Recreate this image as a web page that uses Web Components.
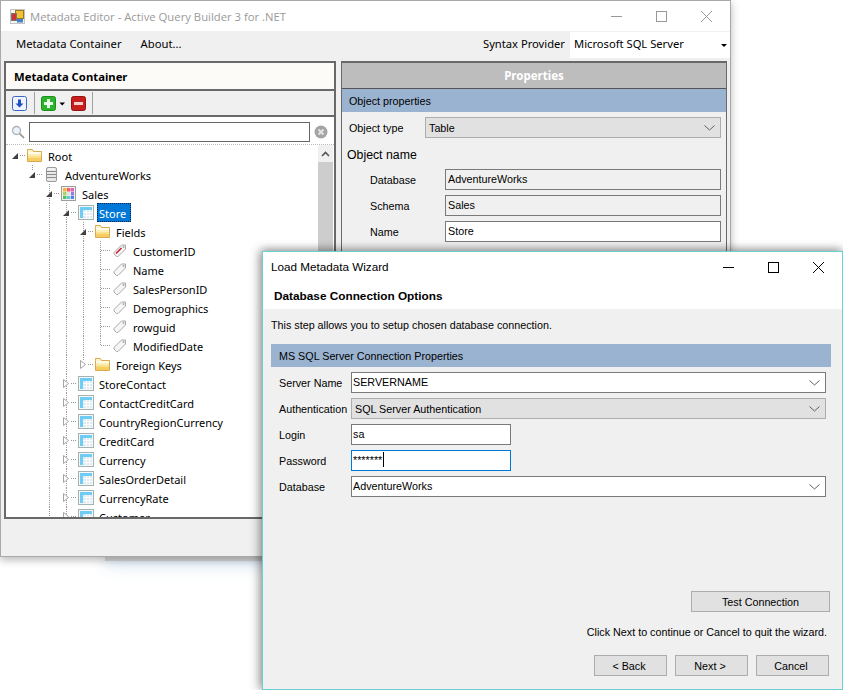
<!DOCTYPE html>
<html lang="en"><head><meta charset="utf-8"><title>Metadata Editor</title>
<style>
html,body{margin:0;padding:0;height:100%;background:#fff;overflow:hidden}
body{position:relative;width:843px;height:690px;font-family:"Liberation Sans",Arial,sans-serif;font-size:10.75px;color:#000}
</style></head><body>

<template id="t-behind"><style>
:host{display:block;position:absolute;left:105px;top:300px;width:300px;height:261px;background:#d6d6d6;box-shadow:0 5px 14px rgba(130,175,215,.3)}
</style></template>

<template id="t-main"><style>
:host{display:flex;flex-direction:column;position:absolute;left:0;top:0;width:729px;height:555px;background:#f0f0f0;border:1px solid #a9a9a9;box-shadow:0 3px 8px rgba(0,0,0,.28)}
.title{height:30px;background:#fff;display:flex;align-items:center;padding-left:9px;gap:5px;font:11.3px "Open Sans",sans-serif;color:#9a9a9a;flex:none}
.title span{flex:1}
.menu{height:27px;display:flex;align-items:center;flex:none;padding-left:15px;font:11.25px "Noto Sans",sans-serif}
.menu .m{margin-right:19px;margin-top:-2px}
.menu .sp{margin-left:auto;margin-right:5px;font-size:11.2px;margin-top:-2px}
.sel{width:160px;height:26px;background:#fff;display:flex;align-items:center;padding:0 0 2px 4px;box-sizing:border-box;margin-right:0;position:relative;font-size:11.2px}
.sel i{position:absolute;right:3px;top:12px;width:0;height:0;border:3px solid transparent;border-top:3px solid #000;border-bottom:0}
.body{flex:1;display:flex;gap:5px;padding:3px 3px 0 3px;min-height:0}
</style>
<div class="title"><svg width="15" height="15" viewBox="0 0 15 15"><rect x=".5" y=".5" width="14" height="14" fill="#f4f4f4" stroke="#c4c4c4"/><rect x="5.5" y="1.5" width="8" height="8" fill="#f2c230" stroke="#9a7a20"/><rect x="1.5" y="4.5" width="5" height="7" fill="#c33" stroke="#777"/><rect x="7" y="10" width="6" height="3.5" fill="#4a7ed0"/></svg><span>Metadata Editor - Active Query Builder 3 for .NET</span><win-controls dim style="margin-right:2px"></win-controls></div>
<div class="menu"><div class="m">Metadata Container</div><div class="m">About...</div><div class="sp">Syntax Provider</div><div class="sel">Microsoft SQL Server<i></i></div></div>
<div class="body"><slot></slot></div>
</template>

<template id="t-ctrl"><style>
:host{display:flex;width:135px;height:30px;flex:none}
div{width:45px;height:100%;display:flex;align-items:center;justify-content:center}
svg{stroke:#000;fill:none;stroke-width:1}
:host([dim]) svg{stroke:#999}
</style>
<div><svg width="12" height="12"><path d="M1 6.5H12"/></svg></div>
<div><svg width="12" height="12"><rect x="1.5" y="1.5" width="10" height="10"/></svg></div>
<div><svg width="12" height="12"><path d="M1 1L12 12M12 1L1 12"/></svg></div>
</template>

<template id="t-left"><style>
:host{display:flex;flex-direction:column;width:332px;height:458px;box-sizing:border-box;border:2px solid #696969;background:#fff;flex:none}
.hd{height:26px;background:#fdfbf8;display:flex;align-items:center;padding-left:8px;font:bold 11.3px "Noto Sans",sans-serif;border-bottom:2px solid #696969;flex:none;color:#000}
.tb{height:24px;background:#f0f0f0;display:flex;align-items:center;border-bottom:2px solid #696969;flex:none;padding-left:6px;box-sizing:content-box}
.sep{width:1px;height:22px;background:#a0a0a0;margin:0 6px}
.search{height:28px;display:flex;align-items:center;flex:none;border-bottom:1px dotted #bbb;box-sizing:border-box;background:#fff;padding:2px 0 0 5px}
.inp{width:281px;height:20px;box-sizing:border-box;border:1px solid #666;margin:0 4px 0 4px;background:#fff}
.main{flex:1;display:flex;min-height:0;position:relative;overflow:hidden}
.tree{flex:1;padding-top:1px;overflow:hidden}
.sb{width:15px;background:#cdcdcd;margin-right:1px;flex:none}
.sb div{height:17px;background:#f0f0f0;display:flex;align-items:center;justify-content:center}
</style>
<div class="hd">Metadata Container</div>
<div class="tb">
<svg width="15" height="15" viewBox="0 0 15 15"><rect x=".5" y=".5" width="14" height="14" rx="2" fill="#eef3fd" stroke="#3b66c9"/><path d="M7.5 11.5L3.5 7.5H6V3.5H9V7.5H11.5Z" fill="#2050c0"/></svg>
<div class="sep" style="margin-left:7px"></div>
<svg width="15" height="15" viewBox="0 0 15 15"><rect x=".5" y=".5" width="14" height="14" rx="2" fill="#2cb52c" stroke="#1a8f1a"/><path d="M6 3H9V6H12V9H9V12H6V9H3V6H6Z" fill="#eaffea"/></svg>
<svg width="9" height="15" viewBox="0 0 9 15" style="margin-left:2px"><path d="M1.5 6.5H7L4.2 9.5Z" fill="#000"/></svg>
<svg width="15" height="15" viewBox="0 0 15 15" style="margin-left:4px"><rect x=".5" y=".5" width="14" height="14" rx="2" fill="#c81e1e" stroke="#941414"/><rect x="3" y="6" width="9" height="3" fill="#f6d0d0"/></svg>
<div class="sep" style="margin-left:6px"></div>
</div>
<div class="search">
<svg width="14" height="14" viewBox="0 0 14 14"><circle cx="5.5" cy="5.5" r="4" fill="#eef3f8" stroke="#a9b4bf" stroke-width="1.3"/><path d="M8.5 8.5L13 13" stroke="#9a8f80" stroke-width="1.7"/></svg>
<div class="inp"></div>
<svg width="14" height="14" viewBox="0 0 14 14"><circle cx="7" cy="7" r="6.5" fill="#a4a4a4"/><path d="M4.5 4.5L9.5 9.5M9.5 4.5L4.5 9.5" stroke="#e4e4e4" stroke-width="1.8"/></svg>
</div>
<div class="main"><div class="tree"><slot></slot></div>
<div class="sb"><div><svg width="9" height="6" viewBox="0 0 9 6"><path d="M1 5L4.5 1.5L8 5" fill="none" stroke="#555" stroke-width="1.6"/></svg></div></div></div>
</template>

<template id="t-row"><style>
:host{display:flex;height:19px;align-items:center;font:11px "Noto Sans",sans-serif;color:#000;white-space:nowrap}
#g{display:contents}
svg{flex:none;display:block}
.l{padding:0 4px 0 1px;height:19px;line-height:19px;box-sizing:border-box;border:1px solid transparent}
:host([sel]) .l{background:#0078d7;color:#fff;border:1px dotted #00224d}
</style><span id="g"></span><span class="l"><slot></slot></span></template>

<template id="t-right"><style>
:host{display:flex;flex-direction:column;flex:1;box-sizing:border-box;border:1px solid #696969;border-top:2px solid #696969;height:493px}
.hd{height:25px;background:#bdbdbd;color:#fff;font:bold 11.5px "Noto Sans",sans-serif;display:flex;align-items:center;justify-content:center;border-bottom:1px solid #555;flex:none;text-align:center}
.sec{height:23px;background:#9ab3d0;display:flex;align-items:center;padding-left:7px;flex:none}
.t{margin:5px 5px 0 7px;display:flex;align-items:center;height:21px}
.t span{width:76px;flex:none}
.on{padding-left:5px;margin-top:10px;height:14px;line-height:14px;font-size:12.3px}
.g{display:grid;grid-template-columns:75px 1fr;row-gap:5px;margin:7px 5px 0 28px;align-items:center}
</style>
<div class="hd">Properties</div><div class="sec">Object properties</div>
<div class="t"><span>Object type</span><wf-combo gray style="flex:1">Table</wf-combo></div>
<div class="on">Object name</div>
<div class="g"><div>Database</div><wf-box ro>AdventureWorks</wf-box><div>Schema</div><wf-box ro>Sales</wf-box><div>Name</div><wf-box>Store</wf-box></div>
</template>

<template id="t-combo"><style>
:host{display:flex;align-items:center;height:21px;box-sizing:border-box;border:1px solid #7a7a7a;background:#fff;padding:0 0 2px var(--pad,2px);position:relative;font-size:10.75px}
:host([gray]){background:#e1e1e1;border-color:#adadad;padding:0 0 0 3px}
svg{position:absolute;right:5px;top:7px}
</style><slot></slot><svg width="11" height="6" viewBox="0 0 11 6"><path d="M.5 .5L5.5 5L10.5 .5" fill="none" stroke="#606060"/></svg></template>

<template id="t-box"><style>
:host{display:flex;align-items:center;height:21px;box-sizing:border-box;border:1px solid #7a7a7a;background:#fff;padding:0 0 2px var(--pad,2px);font-size:10.75px;white-space:nowrap}
:host([ro]){background:#f0f0f0}
:host([focus]){border-color:#0078d7}
</style><slot></slot></template>

<template id="t-btn"><style>
:host{display:flex;align-items:center;justify-content:center;height:21px;box-sizing:border-box;border:1px solid #adadad;background:#e1e1e1;font-size:10.75px;flex:none}
</style><slot></slot></template>

<template id="t-wiz"><style>
:host{display:flex;flex-direction:column;position:absolute;left:262px;top:251px;width:581px;height:439px;box-sizing:border-box;border:1px solid #6cd0d0;background:#f0f0f0;box-shadow:-3px 0 10px rgba(0,0,0,.3),0 -2px 8px rgba(0,0,0,.25)}
.top{background:#fff;height:57px;flex:none}
.title{height:30px;display:flex;align-items:center;padding-left:8px;font-size:11.7px}
.title span{flex:1;margin-top:-2px}
.h{font-weight:bold;font-size:11.8px;padding-left:11px;margin-top:7px}
.d{padding:8px 0 0 8px;height:16px;line-height:16px}
.ban{margin:11px 11px 0 8px;height:23px;background:#9ab3d0;padding-left:8px;display:flex;align-items:center}
.f{--pad:1px;display:grid;grid-template-columns:72px 475px;row-gap:5px;margin:5px 0 0 16px;align-items:center}
.nar{width:160px}
.caret{display:inline-block;width:1px;height:15px;background:#000;margin-left:1px}
.foot{margin-top:auto;display:flex;flex-direction:column;align-items:flex-end;padding-right:13px;padding-bottom:13px}
.hint{margin:12px 2px 0 0;height:16px;line-height:16px}
.btns{display:flex;gap:8px;margin:15px 0 0}
.btns wf-btn{width:73px;padding-right:3px;box-sizing:border-box}
</style>
<div class="top"><div class="title"><span>Load Metadata Wizard</span><win-controls style="margin-right:2px"></win-controls></div><div class="h">Database Connection Options</div></div>
<div class="d">This step allows you to setup chosen database connection.</div>
<div class="ban">MS SQL Server Connection Properties</div>
<div class="f"><div>Server Name</div><wf-combo>SERVERNAME</wf-combo>
<div>Authentication</div><wf-combo gray>SQL Server Authentication</wf-combo>
<div>Login</div><wf-box class="nar">sa</wf-box>
<div>Password</div><wf-box class="nar" focus>*******<span class="caret"></span></wf-box>
<div>Database</div><wf-combo>AdventureWorks</wf-combo></div>
<div class="foot"><wf-btn style="width:139px;margin-right:-1px">Test Connection</wf-btn><div class="hint">Click Next to continue or Cancel to quit the wizard.</div>
<div class="btns"><wf-btn>&lt; Back</wf-btn><wf-btn>Next &gt;</wf-btn><wf-btn>Cancel</wf-btn></div></div>
</template>

<script>
const tpl=id=>document.getElementById(id).content.cloneNode(true);
function simple(name,id){customElements.define(name,class extends HTMLElement{constructor(){super();this.attachShadow({mode:'open'}).appendChild(tpl(id));}});}
[['behind-window','t-behind'],['win-controls','t-ctrl'],['wf-combo','t-combo'],['wf-box','t-box'],['wf-btn','t-btn'],['main-window','t-main'],['left-panel','t-left'],['right-panel','t-right'],['wizard-window','t-wiz']].forEach(a=>simple(a[0],a[1]));

const icons={
 folder:`<path d="M.5 3.5V1.5H5.5L6.5 3.5H14.5V13.5H.5Z" fill="#fdf3cc" stroke="#d9a94e"/><rect x="1" y="4" width="13" height="2" fill="#fffbe8"/><rect x="1" y="6" width="13" height="2" fill="#fdeeb4"/><rect x="1" y="8" width="13" height="2" fill="#fbe08c"/><rect x="1" y="10" width="13" height="3" fill="#f7cd62"/>`,
 db:`<rect x="1.5" y="0.5" width="10" height="14" rx="1.5" fill="#e8e8e8" stroke="#9a9a9a"/><path d="M1.5 4.5H11.5M1.5 7.5H11.5M1.5 10.5H11.5" stroke="#8a8a8a"/><path d="M3 2H10" stroke="#fff"/>`,
 schema:`<rect x=".5" y=".5" width="14" height="14" fill="#f1f1f1" stroke="#9d9d9d"/><rect x="2" y="2" width="3.5" height="3.5" fill="#f3b33d"/><rect x="6" y="2" width="3.5" height="3.5" fill="#ef5f6e"/><rect x="10" y="2" width="3" height="3.5" fill="#e25fc7"/><rect x="2" y="6" width="3.5" height="3.5" fill="#a8d46a"/><rect x="6" y="6" width="3.5" height="3.5" fill="#dfe6e6"/><rect x="10" y="6" width="3" height="3.5" fill="#8f7de2"/><rect x="2" y="10" width="3.5" height="3" fill="#53c35d"/><rect x="6" y="10" width="3.5" height="3" fill="#65c8e2"/><rect x="10" y="10" width="3" height="3" fill="#5a7de8"/>`,
 table:`<rect x=".5" y=".5" width="15" height="14" fill="#f6f8f8" stroke="#a3b3b3"/><rect x="2" y="2" width="12" height="11" fill="#dfe9f0"/><rect x="2" y="2" width="3" height="11" fill="#6fcdf5"/><rect x="2" y="2" width="12" height="3" fill="#6fcdf5"/><path d="M8.5 5V13M11.5 5V13M5 7.5H14M5 10.5H14" stroke="#fff"/>`,
 field:`<path d="M1 9.5L8.5 2H12.5V6L5 13.5H3.5L1 11Z" fill="#f6f6f6" stroke="#a8a8a8"/><circle cx="10.5" cy="4" r="1" fill="#a8a8a8"/>`,
 key:`<path d="M1 9.5L8.5 2H12.5V6L5 13.5H3.5L1 11Z" fill="#f6f6f6" stroke="#a8a8a8"/><path d="M3 10.5L8.5 5" stroke="#c8202c" stroke-width="1.6"/><circle cx="10.5" cy="4" r="1" fill="#a8a8a8"/>`
};
customElements.define('tree-row',class extends HTMLElement{
 constructor(){super();this.attachShadow({mode:'open'}).appendChild(tpl('t-row'));}
 connectedCallback(){
  const d=+this.getAttribute('d'),k=this.getAttribute('k'),st=this.getAttribute('st'),gs=(this.getAttribute('g')||'').split(',').filter(Boolean).map(Number);
  const gw=40+17*d, ax=6+17*d, cy=9.5;let s='';
  const dot=`stroke="#999" stroke-dasharray="1 1"`;
  gs.forEach(x=>s+=`<path d="M${x-5.5} 0V19" ${dot}/>`);
  if(d>0&&st)s+=`<path d="M${ax+3.5} 0V6" ${dot}/>`;
  if(st==='open')s+=`<path d="M${ax} ${cy+3.5}L${ax+6} ${cy-2.5}V${cy+3.5}Z" fill="#404040"/>`;
  if(st==='closed')s+=`<path d="M${ax+.5} ${cy-4}L${ax+5.5} ${cy}L${ax+.5} ${cy+4}Z" fill="#fff" stroke="#a6a6a6"/>`;
  if(st)s+=`<path d="M${ax+8} ${cy}H${ax+14}" ${dot}/>`;
  else s+=`<path d="M${ax+3.5} 0V${this.hasAttribute('last')?cy:19}M${ax+4} ${cy}H${ax+13}" ${dot}/>`;
  const tx=(k==='field'||k==='key')?ax+16:(k==='db'?ax+16:ax+15);
  s+=`<g transform="translate(${tx} 2)">${icons[k]}</g>`;
  this.shadowRoot.getElementById('g').innerHTML=`<svg width="${gw}" height="19" viewBox="0 0 ${gw} 19">${s}</svg>`;
 }
});
</script>

<behind-window></behind-window>
<main-window>
 <left-panel>
  <tree-row d="0" k="folder" st="open">Root</tree-row>
  <tree-row d="1" k="db" st="open">AdventureWorks</tree-row>
  <tree-row d="2" k="schema" st="open" g="49">Sales</tree-row>
  <tree-row d="3" k="table" st="open" g="49,66" sel>Store</tree-row>
  <tree-row d="4" k="folder" st="open" g="49,66,83">Fields</tree-row>
  <tree-row d="5" k="key" g="49,66,83">CustomerID</tree-row>
  <tree-row d="5" k="field" g="49,66,83">Name</tree-row>
  <tree-row d="5" k="field" g="49,66,83">SalesPersonID</tree-row>
  <tree-row d="5" k="field" g="49,66,83">Demographics</tree-row>
  <tree-row d="5" k="field" g="49,66,83">rowguid</tree-row>
  <tree-row d="5" k="field" last g="49,66,83">ModifiedDate</tree-row>
  <tree-row d="4" k="folder" st="closed" g="49,66">Foreign Keys</tree-row>
  <tree-row d="3" k="table" st="closed" g="49,66">StoreContact</tree-row>
  <tree-row d="3" k="table" st="closed" g="49,66">ContactCreditCard</tree-row>
  <tree-row d="3" k="table" st="closed" g="49,66">CountryRegionCurrency</tree-row>
  <tree-row d="3" k="table" st="closed" g="49,66">CreditCard</tree-row>
  <tree-row d="3" k="table" st="closed" g="49,66">Currency</tree-row>
  <tree-row d="3" k="table" st="closed" g="49,66">SalesOrderDetail</tree-row>
  <tree-row d="3" k="table" st="closed" g="49,66">CurrencyRate</tree-row>
  <tree-row d="3" k="table" st="closed" g="49,66">Customer</tree-row>
 </left-panel>
 <right-panel></right-panel>
</main-window>
<wizard-window></wizard-window>
</body></html>
